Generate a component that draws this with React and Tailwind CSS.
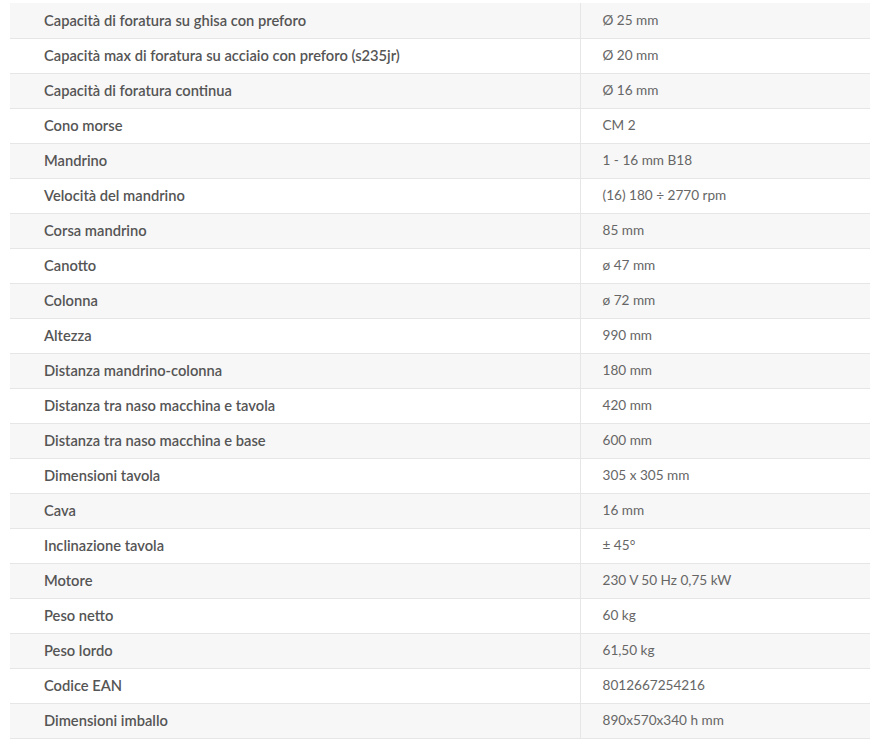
const ROWS = [
  ['Capacità di foratura su ghisa con preforo', 'Ø 25 mm'],
  ['Capacità max di foratura su acciaio con preforo (s235jr)', 'Ø 20 mm'],
  ['Capacità di foratura continua', 'Ø 16 mm'],
  ['Cono morse', 'CM 2'],
  ['Mandrino', '1 - 16 mm B18'],
  ['Velocità del mandrino', '(16) 180 ÷ 2770 rpm'],
  ['Corsa mandrino', '85 mm'],
  ['Canotto', 'ø 47 mm'],
  ['Colonna', 'ø 72 mm'],
  ['Altezza', '990 mm'],
  ['Distanza mandrino-colonna', '180 mm'],
  ['Distanza tra naso macchina e tavola', '420 mm'],
  ['Distanza tra naso macchina e base', '600 mm'],
  ['Dimensioni tavola', '305 x 305 mm'],
  ['Cava', '16 mm'],
  ['Inclinazione tavola', '± 45°'],
  ['Motore', '230 V 50 Hz 0,75 kW'],
  ['Peso netto', '60 kg'],
  ['Peso lordo', '61,50 kg'],
  ['Codice EAN', '8012667254216'],
  ['Dimensioni imballo', '890x570x340 h mm'],
];

export default function App() {
  return (
    <div className="bg-white pt-[3px] pl-[10px]" style={{ fontFamily: 'Lato, "Open Sans", sans-serif' }}>
      <table className="w-[860px] border-collapse">
        <tbody>
          {ROWS.map(([label, value], i) => (
            <tr key={label} className={`h-[35px] border-b border-[#e6e6e6] ${i % 2 === 0 ? 'bg-[#f7f7f7]' : 'bg-white'}`}>
              <td className="w-[570px] pl-[34px] text-[14.7px] font-semibold text-[#555]">{label}</td>
              <td className="border-l border-[#e6e6e6] pl-[22px] text-[13.6px] text-[#666]">{value}</td>
            </tr>
          ))}
        </tbody>
      </table>
    </div>
  );
}
